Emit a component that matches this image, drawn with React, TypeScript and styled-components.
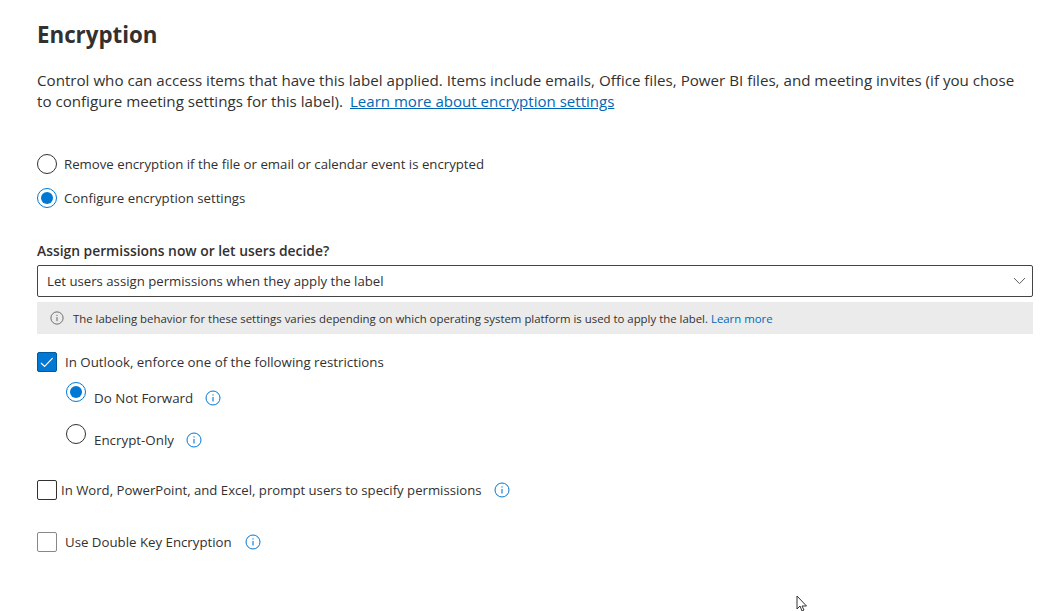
import React from "react";
import styled, { createGlobalStyle } from "styled-components";

const GlobalStyle = createGlobalStyle`
  html, body {
    margin: 0;
    padding: 0;
    background: #fff;
    overflow: hidden;
  }
  body {
    font-family: "Open Sans", "Noto Sans", "Liberation Sans", sans-serif;
    color: #323130;
  }
`;

const Page = styled.div`
  position: relative;
  width: 1063px;
  height: 611px;
  box-sizing: border-box;
  padding: 19px 30px 0 37px;
  overflow: hidden;
`;

const Title = styled.h2`
  margin: 0 0 19px;
  font-size: 22.3px;
  line-height: 32px;
  font-weight: 700;
  color: #323130;
`;

const Intro = styled.p`
  margin: 0 0 42px;
  max-width: 985px;
  font-size: 15.15px;
  line-height: 21px;
`;

const Link = styled.a<{ $underline?: boolean }>`
  color: #0067b8;
  text-decoration: ${(p) => (p.$underline ? "underline" : "none")};
`;

const DocsLink = styled(Link)`
  margin-left: 3px;
  font-size: 15.05px;
`;

const RadioGroup = styled.div`
  display: flex;
  flex-direction: column;
  gap: 14px;
  margin-bottom: 33px;
`;

const Row = styled.div<{ $gap?: number; $size?: number }>`
  display: flex;
  align-items: center;
  height: 20px;
  gap: ${(p) => p.$gap ?? 7}px;
  font-size: ${(p) => p.$size ?? 13.2}px;
  line-height: 20px;
`;

const Circle = styled.span<{ $on?: boolean }>`
  box-sizing: border-box;
  flex: none;
  width: 20px;
  height: 20px;
  border-radius: 50%;
  border: 1px solid ${(p) => (p.$on ? "#0078d4" : "#323130")};
  display: flex;
  align-items: center;
  justify-content: center;
  &::after {
    content: "";
    display: ${(p) => (p.$on ? "block" : "none")};
    width: 12px;
    height: 12px;
    border-radius: 50%;
    background: #0078d4;
  }
`;

const FieldLabel = styled.div`
  font-size: 13.85px;
  line-height: 20px;
  font-weight: 600;
  margin-bottom: 4px;
`;

const Select = styled.div`
  box-sizing: border-box;
  height: 32px;
  border: 1px solid #444;
  border-radius: 2px;
  display: flex;
  align-items: center;
  justify-content: space-between;
  padding: 0 4px 0 9px;
  font-size: 13.2px;
`;

const Notice = styled.div`
  height: 32px;
  margin: 5px 0 18px;
  background: #ebebeb;
  display: flex;
  align-items: center;
  gap: 9px;
  padding-left: 13px;
  font-size: 11.4px;
`;

const Box = styled.span<{ $state: "on" | "dark" | "light" }>`
  box-sizing: border-box;
  flex: none;
  width: 20px;
  height: 20px;
  border-radius: 2px;
  border: 1px solid
    ${(p) => (p.$state === "on" ? "#005a9e" : p.$state === "dark" ? "#323130" : "#8a8886")};
  background: ${(p) => (p.$state === "on" ? "#0078d4" : "#fff")};
  display: flex;
  align-items: center;
  justify-content: center;
`;

const SubOption = styled.div<{ $mb: number }>`
  display: flex;
  margin: 0 0 ${(p) => p.$mb}px 29px;
  font-size: 13.35px;
  line-height: 20px;
`;

const SubLabel = styled.span`
  margin: 6px 12px 0 8px;
`;

const SubIcon = styled.span`
  display: flex;
  align-items: center;
  height: 20px;
  margin-top: 6px;
`;

const CheckRow = styled(Row)<{ $mb: number }>`
  margin-bottom: ${(p) => p.$mb}px;
`;

const RowIcon = styled.span<{ $ml: number }>`
  display: flex;
  margin-left: ${(p) => p.$ml}px;
`;

const Pointer = styled.svg`
  position: absolute;
  left: 796px;
  top: 595px;
`;

const InfoIcon = ({ color = "#0078d4", size = 16 }: { color?: string; size?: number }) => (
  <svg width={size} height={size} viewBox="0 0 16 16" fill="none">
    <circle cx="8" cy="8" r="7" stroke={color} strokeWidth="1" />
    <path d="M8 7v4.6" stroke={color} strokeWidth="1.1" />
    <circle cx="8" cy="4.9" r="0.7" fill={color} />
  </svg>
);

const Chevron = () => (
  <svg width="16" height="16" viewBox="0 0 16 16" fill="none">
    <path d="M2 5l5.500 5.700L13 5" stroke="#605e5c" strokeWidth="1" />
  </svg>
);

const Check = () => (
  <svg width="14" height="14" viewBox="0 0 14 14" fill="none">
    <path d="M1 8l3.600 3.500 8-8.300" stroke="#fff" strokeWidth="1.2" />
  </svg>
);

const App = () => {
  return (
    <Page>
      <GlobalStyle />
      <Title>Encryption</Title>
      <Intro>
        Control who can access items that have this label applied. Items include emails, Office
        files, Power BI files, and meeting invites (if you chose to configure meeting settings for
        this label). <DocsLink $underline>Learn more about encryption settings</DocsLink>
      </Intro>

      <RadioGroup>
        <Row $size={13.23}>
          <Circle />
          Remove encryption if the file or email or calendar event is encrypted
        </Row>
        <Row $size={13.23}>
          <Circle $on />
          Configure encryption settings
        </Row>
      </RadioGroup>

      <FieldLabel>Assign permissions now or let users decide?</FieldLabel>
      <Select>
        Let users assign permissions when they apply the label
        <Chevron />
      </Select>
      <Notice>
        <InfoIcon color="#605e5c" size={14} />
        <span>
          The labeling behavior for these settings varies depending on which operating system
          platform is used to apply the label. <Link>Learn more</Link>
        </span>
      </Notice>

      <CheckRow $gap={8} $mb={10} $size={13.3}>
        <Box $state="on">
          <Check />
        </Box>
        In Outlook, enforce one of the following restrictions
      </CheckRow>
      <SubOption $mb={16}>
        <Circle $on />
        <SubLabel>Do Not Forward</SubLabel>
        <SubIcon>
          <InfoIcon />
        </SubIcon>
      </SubOption>
      <SubOption $mb={30}>
        <Circle />
        <SubLabel>Encrypt-Only</SubLabel>
        <SubIcon>
          <InfoIcon />
        </SubIcon>
      </SubOption>

      <CheckRow $gap={4} $mb={32} $size={13.17}>
        <Box $state="dark" />
        In Word, PowerPoint, and Excel, prompt users to specify permissions
        <RowIcon $ml={8}>
          <InfoIcon />
        </RowIcon>
      </CheckRow>
      <CheckRow $gap={8} $mb={0} $size={13.25}>
        <Box $state="light" />
        Use Double Key Encryption
        <RowIcon $ml={5}>
          <InfoIcon />
        </RowIcon>
      </CheckRow>

      <Pointer width="13" height="17" viewBox="0 0 13 17" fill="none">
        <path d="M1 1v13l3-3 2 5 2-1-2-4h4.500z" fill="#fff" stroke="#333" strokeWidth="1" />
      </Pointer>
    </Page>
  );
};

export default App;
